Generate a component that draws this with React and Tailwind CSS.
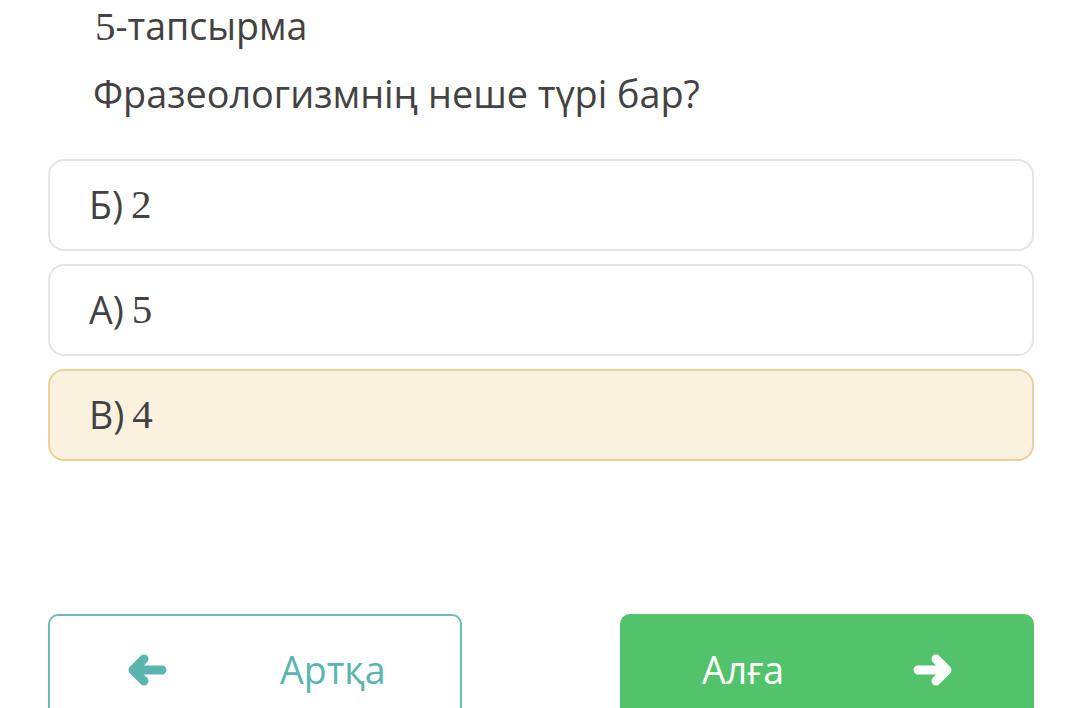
import React from 'react';

const sans = { fontFamily: '"Open Sans", "Noto Sans", sans-serif' };

const Num = ({ children }) => (
  <span className="font-['Liberation_Serif',serif] text-[41px]">{children}</span>
);

const Arrow = ({ dir = 'left', className = '' }) => (
  <svg
    viewBox="0 0 40 34"
    className={className}
    fill="none"
    stroke="currentColor"
    strokeWidth="9"
    strokeLinecap="round"
    strokeLinejoin="round"
  >
    {dir === 'left' ? (
      <path d="M35 17H7M17 6L6 17l11 11" />
    ) : (
      <path d="M5 17h28M23 6l11 11-11 11" />
    )}
  </svg>
);

const options = [
  { id: 'b', label: 'Б)', value: '2', selected: false },
  { id: 'a', label: 'А)', value: '5', selected: false },
  { id: 'v', label: 'В)', value: '4', selected: true },
];

export default function App() {
  return (
    <div
      className="w-[1080px] h-[708px] overflow-hidden bg-white text-[#424242]"
      style={sans}
    >
      {/* Task header */}
      <div className="pl-[95px] pt-[1px]">
        <div className="text-[37.5px] leading-[50px]">
          <Num>5</Num>-тапсырма
        </div>
        <div className="mt-[18px] -ml-[2px] text-[37.8px] leading-[50px]">
          Фразеологизмнің неше түрі бар?
        </div>
      </div>

      {/* Answer options */}
      <div className="mt-[40px] ml-[48px] w-[986px] flex flex-col gap-[13px]">
        {options.map((o) => (
          <div
            key={o.id}
            className={`h-[92px] rounded-[16px] border-2 flex items-center pl-[39px] text-[37.5px] ${
              o.selected
                ? 'bg-[#faf1de] border-[#ebd29a]'
                : 'bg-white border-[#e4e4e4]'
            }`}
          >
            <span>{o.label}</span>
            <span className="ml-[8px]">
              <Num>{o.value}</Num>
            </span>
          </div>
        ))}
      </div>

      {/* Navigation */}
      <div className="mt-[153px] ml-[48px] w-[986px] flex justify-between">
        <button className="w-[414px] h-[112px] rounded-[10px] border-2 border-[#6dbab6] bg-white flex items-center pl-[77px] text-[#5bb5af] text-[37.5px]">
          <Arrow dir="left" className="w-[40px] h-[34px]" />
          <span className="ml-[113px]">Артқа</span>
        </button>
        <button className="w-[414px] h-[112px] rounded-[10px] bg-[#52c26b] flex items-center pl-[82px] text-white text-[37.5px]">
          <span>Алға</span>
          <Arrow dir="right" className="ml-[129px] w-[40px] h-[34px]" />
        </button>
      </div>
    </div>
  );
}
